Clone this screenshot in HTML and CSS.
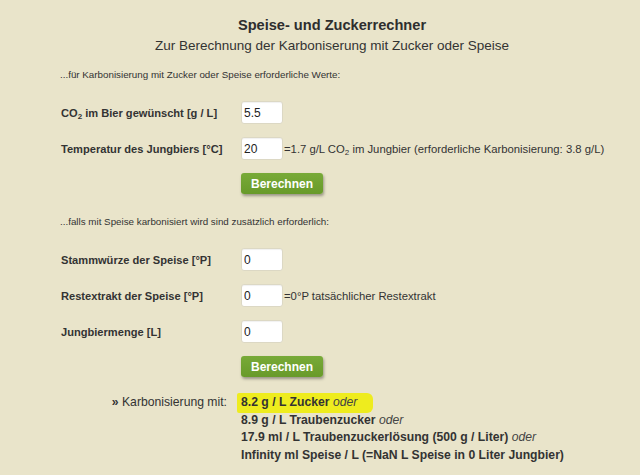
FILE: index.html
```html
<!DOCTYPE html>
<html lang="de">
<head>
<meta charset="utf-8">
<title>Speise- und Zuckerrechner</title>
<link rel="stylesheet" href="styles.css">
</head>
<body>
<div class="page">
  <header class="head">
    <h1 class="title">Speise- und Zuckerrechner</h1>
    <p class="subtitle">Zur Berechnung der Karboniserung mit Zucker oder Speise</p>
  </header>

  <p class="note note-first">...für Karbonisierung mit Zucker oder Speise erforderliche Werte:</p>
  <div class="form">
    <label class="label">CO<sub>2</sub> im Bier gewünscht [g / L]</label>
    <div class="field"><input class="input" type="text" value="5.5"></div>
    <label class="label">Temperatur des Jungbiers [°C]</label>
    <div class="field"><input class="input" type="text" value="20"><span class="hint">=1.7 g/L CO<sub>2</sub> im Jungbier (erforderliche Karbonisierung: 3.8 g/L)</span></div>
    <div></div>
    <div class="field"><button class="btn" type="button">Berechnen</button></div>
  </div>

  <p class="note note-second">...falls mit Speise karbonisiert wird sind zusätzlich erforderlich:</p>
  <div class="form">
    <label class="label">Stammwürze der Speise [°P]</label>
    <div class="field"><input class="input" type="text" value="0"></div>
    <label class="label">Restextrakt der Speise [°P]</label>
    <div class="field"><input class="input" type="text" value="0"><span class="hint">=0°P tatsächlicher Restextrakt</span></div>
    <label class="label">Jungbiermenge [L]</label>
    <div class="field"><input class="input" type="text" value="0"></div>
    <div></div>
    <div class="field"><button class="btn" type="button">Berechnen</button></div>
  </div>

  <div class="result">
    <div class="result-label"><b>»</b> Karbonisierung mit:</div>
    <div class="result-list">
      <div class="result-line"><span class="mark"><b>8.2 g / L Zucker</b> <i>oder</i></span></div>
      <div class="result-line"><b>8.9 g / L Traubenzucker</b> <i>oder</i></div>
      <div class="result-line"><b>17.9 ml / L Traubenzuckerlösung (500 g / Liter)</b> <i>oder</i></div>
      <div class="result-line"><b>Infinity ml Speise / L (=NaN L Speise in 0 Liter Jungbier)</b></div>
    </div>
  </div>
</div>
</body>
</html>
```

FILE: styles.css
```css
html, body {
  margin: 0;
  padding: 0;
}
body {
  background: #e9e4ca;
  color: #333;
  font-family: "Liberation Sans", Arial, sans-serif;
}
.page {
  width: 640px;
  height: 475px;
  overflow: hidden;
}
.head {
  padding: 16px 0 0 24px;
  text-align: center;
}
.title {
  margin: 0;
  font-size: 14.6px;
  line-height: 18px;
  font-weight: bold;
  color: #2e2e2e;
}
.subtitle {
  margin: 3px 0 0;
  font-size: 13.5px;
  line-height: 18px;
  color: #333;
}
.note {
  margin: 0 0 0 60px;
  font-size: 9.8px;
  line-height: 14px;
  color: #333;
}
.note-first {
  margin-top: 13px;
}
.note-second {
  margin-top: 19px;
}
.form {
  display: grid;
  grid-template-columns: 180px auto;
  row-gap: 13px;
  align-items: center;
  padding-left: 61px;
}
.note-first + .form {
  margin-top: 19px;
}
.note-second + .form {
  margin-top: 19px;
}
.label {
  font-size: 11.1px;
  font-weight: bold;
  color: #333;
}
.label sub, .hint sub {
  font-size: 8px;
  vertical-align: -2px;
  line-height: 0;
}
.field {
  display: flex;
  align-items: center;
  height: 23px;
}
.input {
  box-sizing: border-box;
  width: 42px;
  height: 23px;
  margin: 0;
  padding: 0 2px;
  border: 1px solid #dcd8c4;
  border-radius: 3px;
  background: #fff;
  font-family: "Liberation Sans", Arial, sans-serif;
  font-size: 12px;
  color: #222;
  box-shadow: inset 0 1px 1px rgba(0,0,0,0.06);
  outline: none;
}
.hint {
  margin-left: 1px;
  font-size: 11.3px;
  color: #333;
  white-space: nowrap;
}
.btn {
  box-sizing: border-box;
  height: 21px;
  padding: 0 10px;
  margin: 0;
  border: 0;
  border-radius: 3px;
  background: linear-gradient(#78aa38, #689a2a);
  color: #fff;
  font-family: "Liberation Sans", Arial, sans-serif;
  font-size: 12px;
  font-weight: bold;
  box-shadow: 1px 2px 3px rgba(0,0,0,0.35);
  align-self: flex-start;
}
.result {
  display: grid;
  grid-template-columns: 167px auto;
  column-gap: 14px;
  margin: 15px 0 0 60px;
  font-size: 12.2px;
  line-height: 17.7px;
}
.result-label {
  text-align: right;
  color: #333;
}
.result-list b {
  font-weight: bold;
  color: #333;
}
.result-list i {
  color: #444;
}
.mark {
  display: inline-block;
  vertical-align: top;
  background: #eeec1e;
  margin: -1px 0 -1px -4px;
  padding: 1px 16px 1px 4px;
  border-radius: 2px 6px 6px 2px;
}
```
